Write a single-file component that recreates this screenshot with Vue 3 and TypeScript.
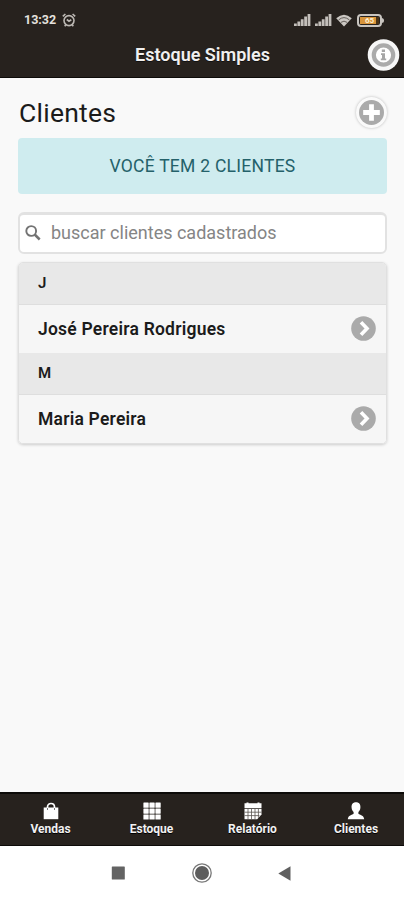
<script setup lang="ts">
interface Group {
  letter: string
  clients: string[]
}

interface Tab {
  label: string
  icon: 'bag' | 'grid' | 'calendar' | 'user'
}

const groups: Group[] = [
  { letter: 'J', clients: ['José Pereira Rodrigues'] },
  { letter: 'M', clients: ['Maria Pereira'] },
]

const tabs: Tab[] = [
  { label: 'Vendas', icon: 'bag' },
  { label: 'Estoque', icon: 'grid' },
  { label: 'Relatório', icon: 'calendar' },
  { label: 'Clientes', icon: 'user' },
]

const columns = [1.4, 7.4, 13.4]
const lines = [0.6, 6.5, 12.4]
</script>

<template>
  <div class="screen">
    <header class="top">
      <div class="status">
        <span class="clock">13:32</span>
        <svg class="alarm" width="14" height="14" viewBox="0 0 14 14" fill="none" stroke="#bdb9b4" stroke-width="1.6">
          <circle cx="7" cy="7.6" r="5" />
          <path d="M.8 3.4 3.4 1M13.2 3.4 10.6 1M4.8 6.5 7 8.2 9.3 6.8M3.7 12 2.7 13.3M10.3 12l1 1.3" />
        </svg>
        <svg v-for="n in 2" :key="n" class="signal" width="17" height="12" viewBox="0 0 17 12" fill="#c3bfba">
          <path d="M0 9.5h2.8V12H0zM3.4 7.5h2.8V12H3.4zM6.8 5.2h2.8V12H6.8zM10.2 2.6H13V12h-2.8zM13.6 0h2.8v12h-2.8z" />
        </svg>
        <svg class="wifi" width="16" height="13" viewBox="0 0 16 13">
          <path d="M.2 4.3Q8-2.9 15.8 4.3L8 12.6z" fill="#cbc7c2" />
          <path d="M2.6 5.9q5.4-4.6 10.8 0M4.9 8.4q3.1-2.5 6.2 0" fill="none" stroke="#4a443f" stroke-width=".8" />
        </svg>
        <span class="battery"><span class="charge">65</span></span>
      </div>
      <div class="bar">
        <h1>Estoque Simples</h1>
        <button class="info" aria-label="Info">
          <svg width="33" height="32" viewBox="0 0 33 32">
            <circle cx="16.5" cy="16" r="15.8" fill="#f7f7f7" />
            <circle cx="16.5" cy="16" r="9.7" fill="#fff" stroke="#aaa" stroke-width="4.2" />
            <path d="M14.8 10.5H18V13h-3.2zM14 14.3h4v5.2h1.2v1.8h-5.4v-1.8H15v-3.4h-1z" fill="#a6a6a6" />
          </svg>
        </button>
      </div>
    </header>

    <main>
      <div class="heading">
        <h2>Clientes</h2>
        <button class="add" aria-label="Adicionar">
          <svg width="25" height="25" viewBox="0 0 24 24">
            <circle cx="12" cy="12" r="12" fill="#aaa" />
            <path d="M9.7 4h4.6v5.7H20v4.6h-5.7V20H9.7v-5.7H4V9.7h5.7z" fill="#fff" />
          </svg>
        </button>
      </div>
      <div class="alert">VOCÊ TEM 2 CLIENTES</div>
      <label class="search">
        <svg width="16" height="16" viewBox="0 0 16 16" fill="none" stroke="#737373">
          <circle cx="6.2" cy="6" r="4.9" stroke-width="1.9" />
          <path d="m9.7 9.5 5 5" stroke-width="2.5" />
        </svg>
        <input type="text" placeholder="buscar clientes cadastrados" />
      </label>
      <ul class="list">
        <template v-for="group in groups" :key="group.letter">
          <li class="divider">{{ group.letter }}</li>
          <li v-for="client in group.clients" :key="client" class="row">
            <span>{{ client }}</span>
            <svg width="25" height="25" viewBox="0 0 25 25">
              <circle cx="12.5" cy="12.5" r="12.3" fill="#aaa" />
              <path d="m10 6.2 6 6.3-6 6.3" fill="none" stroke="#fff" stroke-width="3.6" />
            </svg>
          </li>
        </template>
      </ul>
    </main>

    <nav class="tabs">
      <a v-for="tab in tabs" :key="tab.label" class="tab">
        <svg width="20" height="18" viewBox="0 0 20 18" fill="#fff">
          <template v-if="tab.icon === 'bag'">
            <path d="M2.7 5.5h14.6v11.7H2.7z" />
            <path d="M6.5 7V5C6.5.3 13.5.3 13.5 5v2" fill="none" stroke="#fff" stroke-width="1.7" />
            <path d="M6.5 6v2M13.5 6v2" stroke="#777" />
          </template>
          <template v-else-if="tab.icon === 'grid'">
            <template v-for="x in columns" :key="x">
              <rect v-for="y in lines" :key="y" :x="x" :y="y" width="5.3" height="5.2" rx=".4" />
            </template>
          </template>
          <template v-else-if="tab.icon === 'calendar'">
            <path d="M1.5 1.2h2V.4h2v.8h9V.4h2v.8h2V6h-17z" />
            <path d="M1.5 6.8h17v5.7l-4.3 4.7H1.5z" />
            <path d="M1.5 10.2h17M1.5 13.6h15M5 6.8v10.4M8.5 6.8v10.4M12 6.8v10.4M15.4 6.8v9" stroke="#5b5550" stroke-width=".8" />
          </template>
          <path v-else d="M10 .3c3.2 0 4.7 2.2 4.4 5.4-.2 2-1 3.4-2 4.4v1.6c1.5 1.2 5.5 1.3 5.8 5.6H1.8c.3-4.3 4.3-4.4 5.8-5.6v-1.6c-1-1-1.8-2.4-2-4.4C5.3 2.5 6.8.3 10 .3z" />
        </svg>
        <span>{{ tab.label }}</span>
      </a>
    </nav>

    <div class="system">
      <svg width="14" height="14" viewBox="0 0 14 14"><rect x=".8" y=".5" width="13" height="13" rx=".6" fill="#636363" /></svg>
      <svg width="20" height="20" viewBox="0 0 20 20">
        <circle cx="10" cy="10" r="9.2" fill="none" stroke="#777" stroke-width="1.3" />
        <circle cx="10" cy="10" r="7" fill="#5d5d5d" />
      </svg>
      <svg width="13" height="15" viewBox="0 0 13 15"><path d="M12.5.2v14.6L.3 7.5z" fill="#606060" /></svg>
    </div>
  </div>
</template>

<style>
body {
  margin: 0;
  background: #fff;
}
</style>

<style scoped>
.screen {
  display: flex;
  flex-direction: column;
  width: 404px;
  height: 900px;
  box-sizing: border-box;
  overflow: hidden;
  background: #f9f9f9;
  font-family: Roboto, "Liberation Sans", sans-serif;
  color: #1b1b1b;
}

.top {
  flex: none;
  height: 78px;
  box-sizing: border-box;
  background: #27221e;
  border-bottom: 1px solid #0d0b09;
}

.status {
  display: flex;
  align-items: center;
  height: 38px;
  padding: 2px 22px 0 24px;
  box-sizing: border-box;
}

.clock {
  width: 33px;
  font-size: 12.5px;
  font-weight: 700;
  line-height: 16px;
  color: #e4e1de;
}

.alarm {
  margin-left: 5px;
  margin-right: auto;
}

.signal {
  margin-right: 4px;
}

.wifi {
  margin: 0 5px 0 0;
}

.battery {
  position: relative;
  display: flex;
  width: 25px;
  height: 13px;
  padding: 1px;
  box-sizing: border-box;
  border: 2px solid #c9c5c0;
  border-radius: 4px;
}

.battery::after {
  content: "";
  position: absolute;
  right: -4px;
  top: 2px;
  width: 3px;
  height: 5px;
  border-radius: 0 3px 3px 0;
  background: #c9c5c0;
}

.charge {
  width: 19px;
  background: linear-gradient(90deg, #d8943a 85%, #4b3417 85%);
  color: #fff0d3;
  font-size: 8px;
  font-weight: 700;
  line-height: 7px;
  text-align: center;
}

.bar {
  display: grid;
  grid-template-columns: 48px 1fr 33px;
  align-items: center;
  height: 32px;
  padding-right: 4px;
}

h1 {
  grid-column: 2;
  margin: 0;
  padding: 1px 10px 0 0;
  font-size: 18px;
  font-weight: 600;
  line-height: 32px;
  text-align: center;
  white-space: nowrap;
  color: #f1f0ef;
  text-shadow: 0 1px 0 #111;
}

button {
  display: flex;
  padding: 0;
  border: 0;
  background: none;
}

main {
  flex: 1;
  padding: 14px 17px 0 18px;
}

.heading {
  display: flex;
  align-items: center;
  justify-content: space-between;
  height: 41px;
  margin-bottom: 5px;
}

h2 {
  margin: 0 0 0 1px;
  font-size: 26.5px;
  font-weight: 400;
  line-height: 40px;
  letter-spacing: 0.25px;
}

.add {
  padding: 3px;
  border-radius: 50%;
  background: #fafafa;
  box-shadow: 0 0 3px rgba(0, 0, 0, 0.25);
}

.alert {
  height: 56px;
  border-radius: 4px;
  background: #cfecef;
  color: #24616a;
  font-size: 17.5px;
  line-height: 56px;
  letter-spacing: 0.26px;
  text-align: center;
}

.search {
  display: flex;
  align-items: center;
  height: 42px;
  margin-top: 18px;
  padding: 0 5px 1px;
  box-sizing: border-box;
  border: 2px solid #e2e2e2;
  border-top-width: 3px;
  border-radius: 6px;
  background: #fff;
}

.search input {
  flex: 1;
  min-width: 0;
  margin-left: 10px;
  padding: 0;
  border: 0;
  outline: 0;
  background: none;
  font: 400 18px/24px Roboto, sans-serif;
}

.search input::placeholder {
  color: #858585;
}

.list {
  margin: 8px 0 0;
  padding: 0;
  list-style: none;
  overflow: hidden;
  border: 1px solid #e0e0e0;
  border-radius: 5px;
  box-shadow: 0 1px 3px rgba(0, 0, 0, 0.18);
}

.divider {
  height: 42px;
  padding-left: 19px;
  box-sizing: border-box;
  border-bottom: 1px solid #dedede;
  background: #e8e8e8;
  font-size: 15px;
  font-weight: 600;
  line-height: 41px;
}

.row {
  display: flex;
  align-items: center;
  justify-content: space-between;
  height: 48px;
  padding: 0 10px 1px 19px;
  box-sizing: border-box;
  background: #f6f6f6;
  font-size: 17.5px;
  font-weight: 600;
  letter-spacing: 0.22px;
}

.tabs {
  display: grid;
  grid-template-columns: repeat(3, 101px) 1fr;
  flex: none;
  height: 54px;
  box-sizing: border-box;
  border-top: 2px solid #0d0b09;
  border-bottom: 1px solid #0d0b09;
  background: #27221e;
}

.tab {
  display: flex;
  flex-direction: column;
  align-items: center;
  padding-top: 8px;
  font-size: 12px;
  font-weight: 700;
  line-height: 18px;
  color: #f2f2f2;
  text-shadow: 0 1px 0 #000;
}

.tab:last-child {
  padding-left: 5px;
}

.system {
  display: flex;
  align-items: center;
  justify-content: space-between;
  flex: none;
  height: 54px;
  padding: 0 113px 0 111px;
  background: #fff;
}
</style>
